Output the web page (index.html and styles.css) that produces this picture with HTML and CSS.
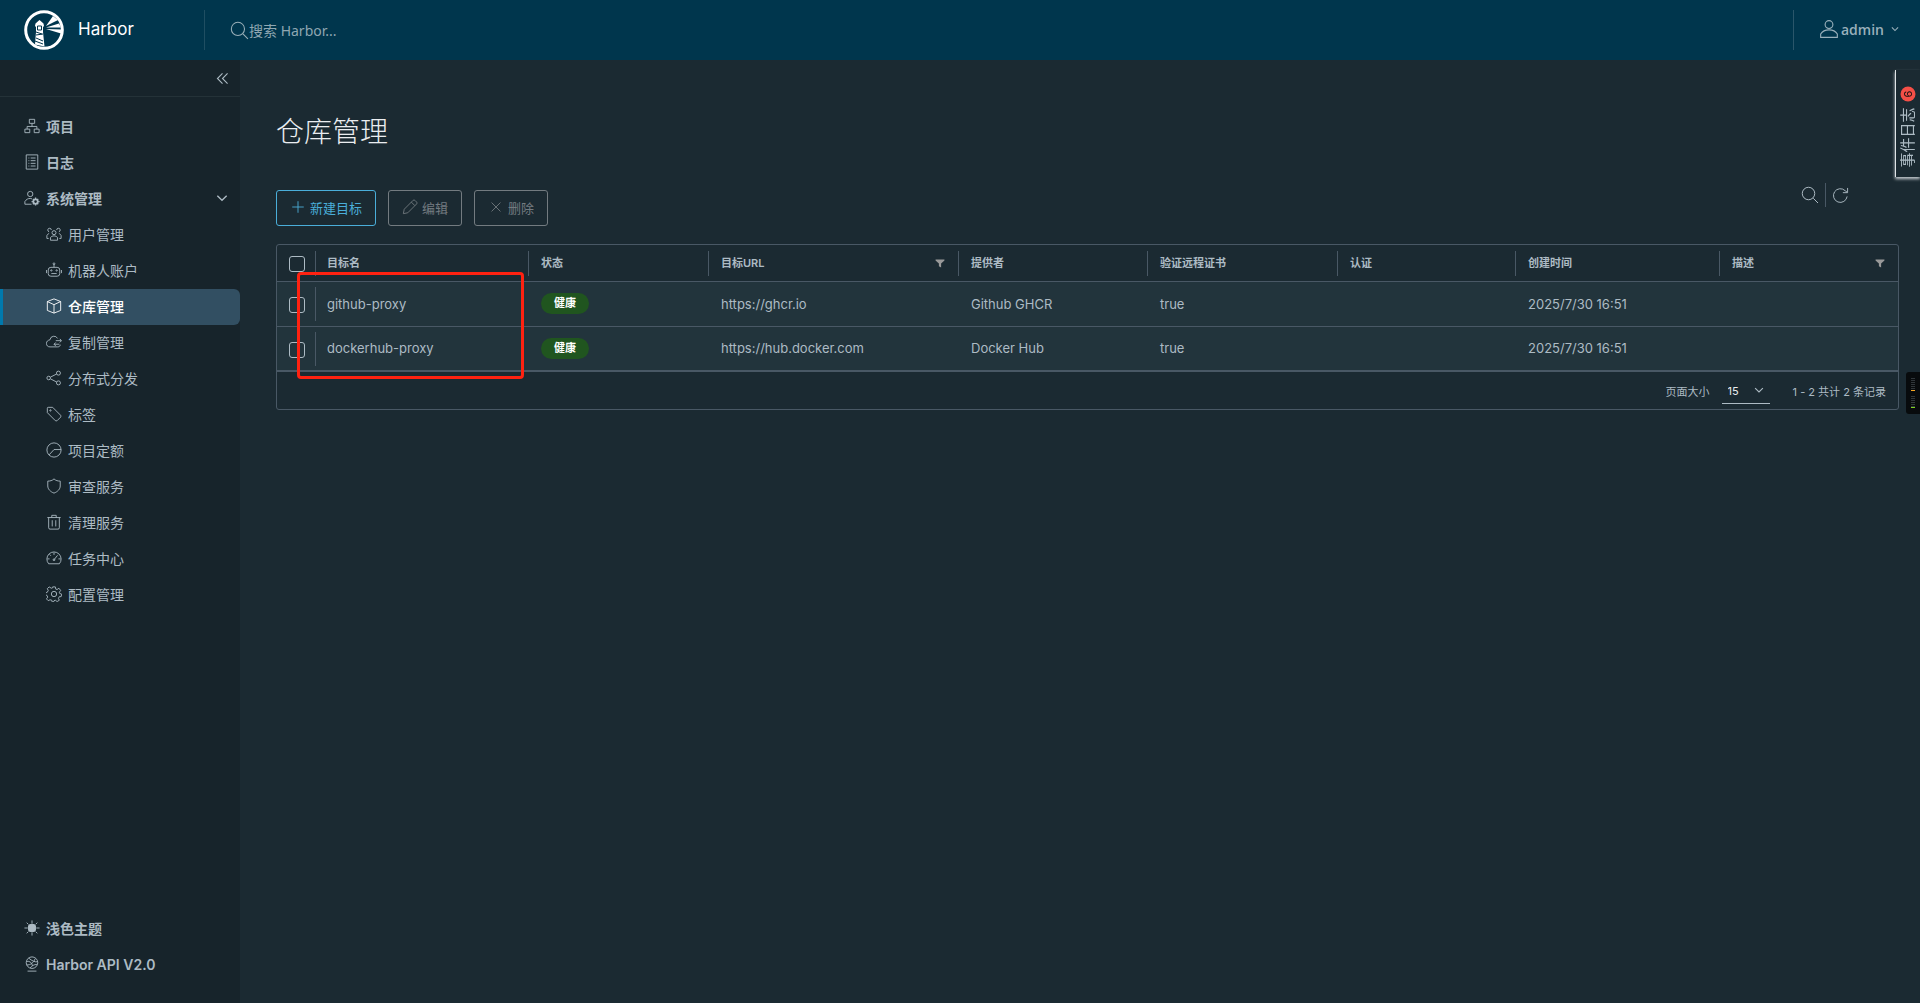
FILE: index.html
```html
<!DOCTYPE html>
<html lang="zh-CN">
<head>
  <meta charset="utf-8"/>
  <meta name="viewport" content="width=device-width, initial-scale=1"/>
  <title>Harbor</title>
  <link rel="stylesheet" href="styles.css">
</head>
<body>
  <!-- Icon sprite -->
  <svg class="sprite" aria-hidden="true">
    <symbol id="i-search" viewBox="0 0 36 36"><circle cx="15" cy="15" r="12.5"/><path d="M24.5 24.5 34 34"/></symbol>
    <symbol id="i-user" viewBox="0 0 36 36"><circle cx="18" cy="10" r="7"/><path d="M3 33v-6c3-5 9-7.500 15-7.500s12 2.500 15 7.500v6z"/></symbol>
    <symbol id="i-angle" viewBox="0 0 36 36"><path d="M4 11l14 14 14-14"/></symbol>
    <symbol id="i-collapse" viewBox="0 0 36 36"><path d="M18 4 4 18l14 14M32 4 18 18l14 14"/></symbol>
    <symbol id="i-org" viewBox="0 0 36 36"><path d="M12 3h12v9H12zM2 25h11v8H2zM23 25h11v8H23zM18 12v7M7 25v-6h22v6"/></symbol>
    <symbol id="i-list" viewBox="0 0 36 36"><path d="M5 2h26v32H5zM10 9h2M10 15h2M10 21h2M10 27h2M15 9h11M15 15h11M15 21h11M15 27h11"/></symbol>
    <symbol id="i-admin" viewBox="0 0 36 36"><circle cx="14" cy="9" r="6"/><path d="M17 32H2v-6c3-5 7-7 12-7l4 1"/><circle cx="26" cy="26" r="5" stroke-width="4"/><path stroke-width="3" d="M26 17v3M26 32v3M17 26h3M32 26h3M20 20l2 2M30 30l2 2M32 20l-2 2M22 30l-2 2"/></symbol>
    <symbol id="i-group" viewBox="0 0 36 36"><circle cx="18" cy="15" r="4.500"/><path d="M10 32v-6c4-5 12-5 16 0v6zM12 9a4 4 0 1 0-5 4M24 9a4 4 0 1 1 5 4M7 17c-3 1-5 3-5 5v6h4M29 17c3 1 5 3 5 5v6h-4"/></symbol>
    <symbol id="i-robot" viewBox="0 0 36 36"><path d="M11 12h14a6 6 0 0 1 6 6v8a6 6 0 0 1-6 6H11a6 6 0 0 1-6-6v-8a6 6 0 0 1 6-6zM18 12V6M1 18v7M35 18v7M12 26h12"/><circle cx="18" cy="4" r="2"/><circle cx="12" cy="19" r="1.500"/><circle cx="24" cy="19" r="1.500"/></symbol>
    <symbol id="i-box" viewBox="0 0 36 36"><path d="M18 2l15 6v20l-15 6-15-6V8zM3 8l15 7 15-7M18 15v19"/></symbol>
    <symbol id="i-cloud" viewBox="0 0 36 36"><path d="M26 10a9 9 0 0 0-17 3c-5 1-8 4-8 8 0 5 3 8 8 8h17c4 0 6-2 6-5M22 15h12M31 11l4 4-4 4M30 23H18M22 19l-4 4 4 4"/></symbol>
    <symbol id="i-share" viewBox="0 0 36 36"><circle cx="28" cy="7" r="4.500"/><circle cx="28" cy="29" r="4.500"/><circle cx="6" cy="18" r="4"/><path d="M10 16l14-7M10 20l14 7"/></symbol>
    <symbol id="i-tag" viewBox="0 0 36 36"><path d="M3 5v10l18 18q2 1 4 0l8-8q1-2 0-4L15 3H5q-2 0-2 2z"/><circle cx="10" cy="10" r="1.500"/></symbol>
    <symbol id="i-quota" viewBox="0 0 36 36"><circle cx="18" cy="18" r="16"/><path d="M34 17H18L7 29"/></symbol>
    <symbol id="i-shield" viewBox="0 0 36 36"><path d="M18 2c4 4 9 5 14 5v11c0 7-6 13-14 16C10 31 4 25 4 18V7c5 0 10-1 14-5z"/></symbol>
    <symbol id="i-trash" viewBox="0 0 36 36"><path d="M3 8h30M6 8v23q0 3 3 3h18q3 0 3-3V8M13 8V3h10v5M14 14v14M22 14v14"/></symbol>
    <symbol id="i-gauge" viewBox="0 0 36 36"><path d="M6 31a16 16 0 1 1 24 0zM18 6v5M3 20h5M28 20h5M8 10l3 3M18 22l8-10"/><circle cx="18" cy="22" r="2"/></symbol>
    <symbol id="i-cog" viewBox="0 0 36 36"><path d="M15 2h6l1 5 3 1 4-3 4 5-3 4 1 3 4 1v2l-1 4-4 0-2 4 2 4-5 3-4-3-3 1-1 3h-3l-1-4-4-1-4 2-4-4 3-4-2-4-3-1v-5l4-1 2-4-2-4 4-4 5 3 3-1z"/><circle cx="18" cy="18" r="6"/></symbol>
    <symbol id="i-sun" viewBox="0 0 36 36"><circle cx="18" cy="18" r="9" fill="currentColor"/><path d="M18 1v6M18 29v6M1 18h6M29 18h6M6 6l4 4M26 26l4 4M30 6l-4 4M10 26l-4 4"/></symbol>
    <symbol id="i-api" viewBox="0 0 36 36"><circle cx="18" cy="15" r="13"/><path d="M8 34h20M6 12c7-1 12 3 13 10M11 5c7 6 13 9 20 8M6 20c8 1 16-5 19-14M14 27c3-5 9-8 15-8"/></symbol>
    <symbol id="i-plus" viewBox="0 0 36 36"><path d="M18 5v26M5 18h26"/></symbol>
    <symbol id="i-pencil" viewBox="0 0 36 36"><path d="M3 33l2-10L25 3q2-2 4 0l4 4q2 2 0 4L13 31zM21 7l8 8"/></symbol>
    <symbol id="i-times" viewBox="0 0 36 36"><path d="M8 8l20 20M28 8 8 28"/></symbol>
    <symbol id="i-refresh" viewBox="0 0 36 36"><path d="M32 20A14.500 14.500 0 1 1 28 8l4 3M33 2v10H23"/></symbol>
    <symbol id="i-filter" viewBox="0 0 36 36"><path fill="currentColor" stroke="none" d="M2 5h32v4L22 20v14l-8-4V20L2 9z"/></symbol>
  </svg>

  <header class="header">
    <a class="brand" href="#">
      <svg class="logo" viewBox="0 0 40 40" aria-hidden="true">
        <circle cx="20" cy="20" r="18.300" fill="none" stroke="#fff" stroke-width="3"/>
        <path fill="#fff" d="M11 16l.5-2.500 4-3.500 4 3.500.5 2.500-1 1v5l1.500 14.500-9.500-2L12 22v-5zM22 16l7-10 5 4zM22 17.500l13-4 2 4zM22 19l15 .5v4z"/>
        <path fill="none" stroke="#00364d" d="M13.500 16v4h4v-4zM12 25l7-1M12 28l7 3M11 31l8 3M12 22l6 2"/>
      </svg>
      <span class="brand-name">Harbor</span>
    </a>
    <label class="search">
      <svg class="icon icon-search"><use href="#i-search"/></svg>
      <input type="text" placeholder="搜索 Harbor..." aria-label="搜索 Harbor">
    </label>
    <button class="account" type="button">
      <svg class="icon icon-user"><use href="#i-user"/></svg>
      <span>admin</span>
      <svg class="icon icon-caret"><use href="#i-angle"/></svg>
    </button>
  </header>

  <div class="layout">
    <nav class="sidebar">
      <div class="collapse">
        <button type="button" aria-label="收起"><svg class="icon icon-collapse"><use href="#i-collapse"/></svg></button>
      </div>
      <div class="nav-list">
        <a class="nav-link" href="#"><svg class="icon"><use href="#i-org"/></svg>项目</a>
        <a class="nav-link" href="#"><svg class="icon"><use href="#i-list"/></svg>日志</a>
        <a class="nav-link" href="#"><svg class="icon"><use href="#i-admin"/></svg>系统管理<svg class="icon icon-toggle"><use href="#i-angle"/></svg></a>
        <a class="nav-link sub" href="#"><svg class="icon"><use href="#i-group"/></svg>用户管理</a>
        <a class="nav-link sub" href="#"><svg class="icon"><use href="#i-robot"/></svg>机器人账户</a>
        <a class="nav-link sub active" href="#"><svg class="icon"><use href="#i-box"/></svg>仓库管理</a>
        <a class="nav-link sub" href="#"><svg class="icon"><use href="#i-cloud"/></svg>复制管理</a>
        <a class="nav-link sub" href="#"><svg class="icon"><use href="#i-share"/></svg>分布式分发</a>
        <a class="nav-link sub" href="#"><svg class="icon"><use href="#i-tag"/></svg>标签</a>
        <a class="nav-link sub" href="#"><svg class="icon"><use href="#i-quota"/></svg>项目定额</a>
        <a class="nav-link sub" href="#"><svg class="icon"><use href="#i-shield"/></svg>审查服务</a>
        <a class="nav-link sub" href="#"><svg class="icon"><use href="#i-trash"/></svg>清理服务</a>
        <a class="nav-link sub" href="#"><svg class="icon"><use href="#i-gauge"/></svg>任务中心</a>
        <a class="nav-link sub" href="#"><svg class="icon"><use href="#i-cog"/></svg>配置管理</a>
      </div>
      <div class="nav-bottom">
        <a class="nav-link" href="#"><svg class="icon"><use href="#i-sun"/></svg>浅色主题</a>
        <a class="nav-link" href="#"><svg class="icon"><use href="#i-api"/></svg>Harbor API V2.0</a>
      </div>
    </nav>

    <main class="content">
      <h1>仓库管理</h1>
      <div class="toolbar">
        <div class="actions">
          <button class="btn btn-primary" type="button"><svg class="icon"><use href="#i-plus"/></svg>新建目标</button>
          <button class="btn" type="button" disabled><svg class="icon"><use href="#i-pencil"/></svg>编辑</button>
          <button class="btn" type="button" disabled><svg class="icon"><use href="#i-times"/></svg>删除</button>
        </div>
        <div class="tools">
          <button type="button" aria-label="搜索"><svg class="icon icon-tool"><use href="#i-search"/></svg></button>
          <button type="button" aria-label="刷新"><svg class="icon icon-tool"><use href="#i-refresh"/></svg></button>
        </div>
      </div>

      <div class="datagrid">
        <table>
          <colgroup>
            <col class="c-check"><col class="c-name"><col class="c-status"><col class="c-url"><col class="c-provider">
            <col class="c-verify"><col class="c-auth"><col class="c-time"><col>
          </colgroup>
          <thead>
            <tr>
              <th><input type="checkbox" aria-label="全选"></th>
              <th>目标名</th>
              <th>状态</th>
              <th><div class="th-filter">目标URL<svg class="icon icon-filter"><use href="#i-filter"/></svg></div></th>
              <th>提供者</th>
              <th>验证远程证书</th>
              <th>认证</th>
              <th>创建时间</th>
              <th><div class="th-filter">描述<svg class="icon icon-filter"><use href="#i-filter"/></svg></div></th>
            </tr>
          </thead>
          <tbody>
            <tr>
              <td><input type="checkbox" aria-label="github-proxy"></td>
              <td>github-proxy</td>
              <td><span class="label">健康</span></td>
              <td>https://ghcr.io</td>
              <td>Github GHCR</td>
              <td>true</td>
              <td></td>
              <td>2025/7/30 16:51</td>
              <td></td>
            </tr>
            <tr>
              <td><input type="checkbox" aria-label="dockerhub-proxy"></td>
              <td>dockerhub-proxy</td>
              <td><span class="label">健康</span></td>
              <td>https://hub.docker.com</td>
              <td>Docker Hub</td>
              <td>true</td>
              <td></td>
              <td>2025/7/30 16:51</td>
              <td></td>
            </tr>
          </tbody>
        </table>
        <div class="pager">
          <label for="pageSize">页面大小</label>
          <div class="select">
            <select id="pageSize"><option>15</option><option>25</option><option>50</option></select>
            <svg class="icon"><use href="#i-angle"/></svg>
          </div>
          <span>1 - 2 共计 2 条记录</span>
        </div>
        <div class="highlight"></div>
      </div>
    </main>
  </div>

  <!-- Event log tab on the right edge -->
  <button class="event-tab" type="button"><span class="event-inner">事件日志<span class="badge">6</span></span></button>

  <div class="meter">
    <div class="bars amber"></div>
    <div class="bars green"></div>
  </div>
</body>
</html>
```
FILE: styles.css
```css
* {
  box-sizing: border-box;
}
body {
  margin: 0;
  min-height: 100vh;
  display: flex;
  flex-direction: column;
  background: #1b2a32;
  color: #adbbc4;
  font-family: Inter, "Noto Sans CJK SC", sans-serif;
  font-size: 13px;
}
a {
  color: inherit;
  text-decoration: none;
}
button {
  font: inherit;
  color: inherit;
  background: none;
  border: 0;
  padding: 0;
  cursor: pointer;
}
.sprite {
  position: absolute;
  width: 0;
  height: 0;
}
.icon {
  width: 16px;
  height: 16px;
  flex: none;
  fill: none;
  stroke: currentColor;
  stroke-width: 2;
}

/* Header */
.header {
  height: 60px;
  display: flex;
  align-items: center;
  background: #00364d;
}
.brand {
  width: 204px;
  padding-left: 24px;
  display: flex;
  align-items: center;
  gap: 14px;
  color: #fff;
}
.logo {
  width: 40px;
  height: 40px;
}
.brand-name {
  padding-bottom: 2px;
  font-size: 17px;
  line-height: 24px;
}
.search {
  flex: 1;
  height: 40px;
  padding-left: 25px;
  display: flex;
  align-items: center;
  border-left: 1px solid #1f4e62;
}
.icon-search {
  width: 19px;
  height: 19px;
  color: #99afb8;
}
.search input {
  flex: 1;
  padding: 0;
  border: 0;
  outline: 0;
  background: none;
  color: #fff;
  font-family: "Noto Sans", "Noto Sans CJK SC", sans-serif;
  font-size: 14px;
}
.search input::placeholder {
  color: #8fa7b2;
}
.account {
  height: 40px;
  padding: 0 21px 2px 25px;
  display: flex;
  align-items: center;
  border-left: 1px solid #2a566a;
  color: #99b0bb;
  font-family: "Open Sans", sans-serif;
  font-size: 14px;
  font-weight: 600;
}
.icon-user {
  width: 20px;
  height: 20px;
  margin-right: 2px;
}
.icon-caret {
  width: 8px;
  height: 8px;
  margin-left: 7px;
  stroke-width: 5;
}

/* Sidebar */
.layout {
  flex: 1;
  display: flex;
}
.sidebar {
  width: 240px;
  flex: none;
  display: flex;
  flex-direction: column;
  background: #17242b;
}
.collapse {
  height: 37px;
  padding-right: 11px;
  display: flex;
  align-items: center;
  justify-content: flex-end;
  border-bottom: 1px solid #243238;
}
.collapse button {
  display: flex;
}
.icon-collapse {
  width: 13px;
  height: 13px;
  stroke-width: 3;
}
.nav-list {
  padding-top: 12px;
}
.nav-bottom {
  margin-top: auto;
  padding-bottom: 20px;
}
.nav-link {
  height: 36px;
  padding: 0 12px 2px 24px;
  display: flex;
  align-items: center;
  gap: 6px;
  font-size: 14px;
  font-weight: 600;
}
.nav-link.sub {
  padding-left: 46px;
  font-weight: 400;
}
.nav-link.active {
  background: #324f62;
  box-shadow: inset 3px 0 #0079ad;
  border-radius: 0 6px 6px 0;
  color: #fff;
  font-weight: 500;
}
.icon-toggle {
  width: 12px;
  height: 12px;
  margin-left: auto;
  stroke-width: 4;
}

/* Content */
.content {
  flex: 1;
  min-width: 0;
  padding: 52px 21px 24px 36px;
}
h1 {
  margin: 0 0 38px;
  color: #eaedf0;
  font-size: 28px;
  font-weight: 300;
  line-height: 40px;
}
.toolbar {
  margin-bottom: 18px;
  display: flex;
  justify-content: space-between;
  align-items: flex-start;
}
.actions {
  display: flex;
  gap: 12px;
}
.btn {
  height: 36px;
  padding: 0 13px 2px;
  display: flex;
  align-items: center;
  gap: 4px;
  border: 1px solid #737b80;
  border-radius: 3px;
  color: #737b80;
  font-size: 13px;
}
.btn-primary {
  border-color: #4aaed9;
  color: #4aaed9;
}
.tools {
  height: 24px;
  margin-top: -7px;
  padding-right: 50px;
  display: flex;
}
.tools button {
  width: 24px;
  display: flex;
  align-items: center;
}
.tools button + button {
  padding-left: 6px;
  border-left: 1px solid #495865;
}
.icon-tool {
  width: 18px;
  height: 18px;
}
.tools button + button .icon {
  width: 17px;
  height: 17px;
}

/* Data grid */
.datagrid {
  position: relative;
  border: 1px solid #495865;
  border-radius: 3px;
}
table {
  width: 100%;
  table-layout: fixed;
  border-collapse: collapse;
}
.c-check { width: 38px; }
.c-name { width: 213px; }
.c-status { width: 180px; }
.c-url { width: 250px; }
.c-provider { width: 189px; }
.c-verify { width: 190px; }
.c-auth { width: 178px; }
.c-time { width: 204px; }
th, td {
  padding: 0 12px 0 13px;
  text-align: left;
}
th {
  height: 36px;
  padding-bottom: 1px;
  font-size: 11px;
  font-weight: 600;
  background: linear-gradient(#495865, #495865) 0 6px / 1px 25px no-repeat;
}
td {
  height: 45px;
  border-top: 1px solid #495865;
  background-color: #22343c;
}
th:first-child, td:first-child,
th:nth-child(2), td:nth-child(2) {
  padding-left: 12px;
}
td:nth-child(2) {
  background: #22343c linear-gradient(#495865, #495865) 0 5px / 1px 34px no-repeat;
}
th:first-child {
  background: none;
}
tbody {
  border-bottom: 2px solid #495865;
}
input[type="checkbox"] {
  appearance: none;
  display: block;
  width: 16px;
  height: 16px;
  margin: 3px 0 0;
  border: 1px solid #adbbc4;
  border-radius: 3px;
}
.th-filter {
  display: flex;
  align-items: center;
  justify-content: space-between;
}
.icon-filter {
  width: 10px;
  height: 10px;
  margin: 2px 1px 0 0;
  color: #999;
}
.label {
  display: inline-block;
  padding: 0 13px;
  border-radius: 11px;
  background: #20551f;
  color: #fff;
  font-size: 11px;
  font-weight: 600;
  line-height: 21px;
}
.pager {
  height: 37px;
  padding-right: 12px;
  display: flex;
  align-items: center;
  justify-content: flex-end;
  font-size: 11px;
}
.select {
  position: relative;
  margin: 0 23px 0 12px;
}
.select select {
  width: 48px;
  height: 26px;
  padding: 2px 6px 0;
  appearance: none;
  border: 0;
  border-bottom: 1px solid #adbbc4;
  border-radius: 0;
  background: none;
  color: #eaedf0;
  font: inherit;
}
.select .icon {
  position: absolute;
  top: 7px;
  right: 6px;
  width: 10px;
  height: 10px;
  stroke-width: 4;
  pointer-events: none;
}
.highlight {
  position: absolute;
  top: 27px;
  left: 20px;
  width: 227px;
  height: 107px;
  border: 3px solid #ff2211;
  border-radius: 4px;
}

/* Right edge */
.event-tab {
  position: fixed;
  top: 70px;
  right: 0;
  width: 25px;
  height: 107px;
  padding: 7px 1px 0 0;
  background: #1b2a32;
  border-left: 1px solid #dfe4e7;
  box-shadow: 0 2px 3px #c5cbd0;
  display: flex;
  align-items: center;
  justify-content: center;
}
.event-inner {
  flex: none;
  display: flex;
  align-items: center;
  gap: 6px;
  font-size: 15px;
  line-height: 24px;
  transform: rotate(-90deg);
}
.badge {
  width: 15px;
  height: 15px;
  border-radius: 50%;
  background: #f54f47;
  color: #111;
  font-size: 11px;
  line-height: 15px;
  text-align: center;
}
.meter {
  position: fixed;
  top: 372px;
  right: 0;
  width: 14px;
  height: 42px;
  padding: 6px 5px;
  display: flex;
  flex-direction: column;
  gap: 5px;
  background: #080b0d;
  border-radius: 3px 0 0 3px;
}
.bars {
  height: 13px;
  background: repeating-linear-gradient(#30363a 0 1px, transparent 1px 2px);
}
.amber {
  border-bottom: 1px solid #f5a623;
}
.green {
  border-bottom: 1px solid #7ed321;
}
```
